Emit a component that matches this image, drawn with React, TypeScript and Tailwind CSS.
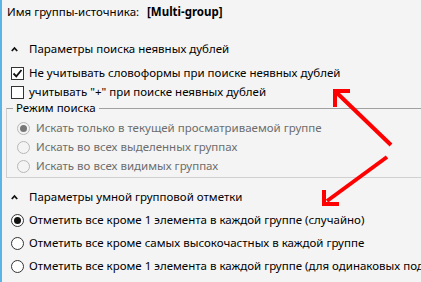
import React from "react";

const font = { fontFamily: '"Noto Sans", "Open Sans", sans-serif' };

function Check({ checked }: { checked?: boolean }) {
  return (
    <div className="w-[13px] h-[13px] border border-[#333] bg-white flex items-center justify-center shrink-0">
      {checked && (
        <svg width="11" height="11" viewBox="0 0 11 11">
          <path d="M1.5 5.5 L4.3 8.3 L9.5 2" fill="none" stroke="#111" strokeWidth="1.8" />
        </svg>
      )}
    </div>
  );
}

function Radio({ checked, disabled }: { checked?: boolean; disabled?: boolean }) {
  return (
    <div
      className={`w-[13px] h-[13px] rounded-full border flex items-center justify-center shrink-0 ${
        disabled ? "border-[#b8b8b8] bg-[#f4f4f4]" : "border-[#333] bg-white"
      }`}
    >
      {checked && (
        <div className={`w-[7px] h-[7px] rounded-full ${disabled ? "bg-[#777]" : "bg-[#111]"}`} />
      )}
    </div>
  );
}

function Chevron() {
  return (
    <svg width="7" height="6" viewBox="0 0 7 6" className="shrink-0">
      <path d="M0.8 5 L3.5 2 L6.2 5" fill="none" stroke="#111" strokeWidth="1.8" />
    </svg>
  );
}

export default function App() {
  return (
    <div
      className="relative w-[421px] h-[282px] bg-[#f4f4f4] border-l-2 border-[#5ab4e6] overflow-hidden text-[11.5px] leading-[16px] text-black"
      style={font}
    >
      <div className="flex items-center h-[16px] mt-[4px] pl-[5px]">
        <span className="w-[140px]">Имя группы-источника:</span>
        <span className="font-bold">[Multi-group]</span>
      </div>

      <div className="flex items-center h-[16px] mt-[21px] pl-[9px] gap-[11px]">
        <Chevron />
        <span>Параметры поиска неявных дублей</span>
      </div>

      <div className="flex items-center h-[16px] mt-[8px] pl-[9px] gap-[5px]">
        <Check checked />
        <span>Не учитывать словоформы при поиске неявных дублей</span>
      </div>
      <div className="flex items-center h-[16px] mt-[3px] pl-[9px] gap-[5px]">
        <Check />
        <span>учитывать "+" при поиске неявных дублей</span>
      </div>

      <div className="relative ml-[4px] mt-[8px] h-[70px] border-t border-l border-b border-t-[#a0a0a0] border-l-[#d0d0d0] border-b-[#d0d0d0] pt-[11px] pl-[10px]">
        <span className="absolute left-[6px] top-[-9px] px-[3px] bg-[#f4f4f4]">Режим поиска</span>
        <div className="flex flex-col gap-[3px] text-[#6d6d6d]">
          <div className="flex items-center h-[16px] gap-[6px]">
            <Radio checked disabled />
            <span>Искать только в текущей просматриваемой группе</span>
          </div>
          <div className="flex items-center h-[16px] gap-[6px]">
            <Radio disabled />
            <span>Искать во всех выделенных группах</span>
          </div>
          <div className="flex items-center h-[16px] gap-[6px]">
            <Radio disabled />
            <span>Искать во всех видимых группах</span>
          </div>
        </div>
      </div>

      <div className="flex items-center h-[16px] mt-[11px] pl-[9px] gap-[11px]">
        <Chevron />
        <span>Параметры умной групповой отметки</span>
      </div>

      <div className="flex flex-col gap-[7px] mt-[7px] pl-[9px]">
        <div className="flex items-center h-[16px] gap-[5px]">
          <Radio checked />
          <span className="whitespace-nowrap">Отметить все кроме 1 элемента в каждой группе (случайно)</span>
        </div>
        <div className="flex items-center h-[16px] gap-[5px]">
          <Radio />
          <span className="whitespace-nowrap">Отметить все кроме самых высокочастных в каждой группе</span>
        </div>
        <div className="flex items-center h-[16px] gap-[5px]">
          <Radio />
          <span className="whitespace-nowrap">Отметить все кроме 1 элемента в каждой группе (для одинаковых подписей)</span>
        </div>
      </div>

      <svg className="absolute left-0 top-0 pointer-events-none" width="421" height="282" viewBox="0 0 421 282">
        <g stroke="#ff0000" strokeWidth="4" fill="none" strokeLinecap="butt" strokeLinejoin="miter">
          <path d="M389 145 L335 93" />
          <polyline points="348,91 333,91 333,107" />
          <path d="M385 157 L325 201" />
          <polyline points="322,190 322,204 337,204" />
        </g>
      </svg>
    </div>
  );
}
